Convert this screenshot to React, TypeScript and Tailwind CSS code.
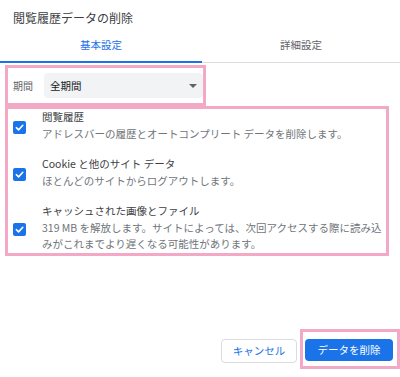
import React from 'react';

const pink = 'border-[#f3a8c6]';

const rows = [
  { title: '閲覧履歴', desc: 'アドレスバーの履歴とオートコンプリート データを削除します。' },
  { title: 'Cookie と他のサイト データ', desc: 'ほとんどのサイトからログアウトします。' },
  {
    title: 'キャッシュされた画像とファイル',
    desc: '319 MB を解放します。サイトによっては、次回アクセスする際に読み込みがこれまでより遅くなる可能性があります。',
  },
];

const CheckBox: React.FC = () => (
  <span className="flex h-[13px] w-[13px] shrink-0 items-center justify-center rounded-[2px] bg-[#1a73e8]">
    <svg viewBox="0 0 12 12" className="h-[11px] w-[11px]" fill="none">
      <path d="M2.5 6.2 L5 8.6 L9.6 3.6" stroke="white" strokeWidth="1.7" strokeLinecap="round" strokeLinejoin="round" />
    </svg>
  </span>
);

const App: React.FC = () => {
  return (
    <div
      className="h-[377px] w-[400px] overflow-hidden bg-white text-[#202124]"
      style={{ fontFamily: '"Noto Sans CJK JP", "Noto Sans", sans-serif' }}
    >
      <div className="h-[30px] pl-[13px] pt-[10px] text-[12px] leading-[16px] text-[#3c4043]">閲覧履歴データの削除</div>

      {/* tabs */}
      <div className="flex h-[33px] border-b border-[#dadce0] text-[10.5px] leading-[16px]">
        <div className="-mb-px flex w-[202px] justify-center border-b-2 border-[#1a73e8] pt-[7px] text-[#1a73e8]">基本設定</div>
        <div className="flex flex-1 justify-center pt-[7px] text-[#5f6368]">詳細設定</div>
      </div>

      {/* period */}
      <div className={`ml-[5px] mt-[2px] flex h-[41px] w-[201px] items-center border-[3px] ${pink}`}>
        <span className="ml-[5px] w-[31px] text-[10px] text-[#5f6368]">期間</span>
        <div className="flex h-[25px] w-[159px] items-center justify-between rounded-[4px] bg-[#f1f3f4] pl-[6px] pr-[6px] text-[10.5px]">
          <span>全期間</span>
          <span className="h-0 w-0 border-x-[4px] border-t-[4px] border-x-transparent border-t-[#5f6368]" />
        </div>
      </div>

      {/* checkboxes */}
      <div className={`ml-[5px] flex h-[150px] w-[384px] flex-col gap-[14px] border-[3px] ${pink}`}>
        {rows.map((r) => (
          <div key={r.title} className="flex items-center">
            <div className="ml-[5px] mt-[3px] w-[29px]">
              <CheckBox />
            </div>
            <div className="flex-1 pr-[1px] text-[10.5px] leading-[16.5px]">
              <div className="text-[#3c4043]">{r.title}</div>
              <div className="text-[#70757a]">{r.desc}</div>
            </div>
          </div>
        ))}
      </div>

      {/* footer */}
      <div className="mt-[73px] flex items-center justify-end">
        <button className="mr-[3px] mt-[4px] h-[24px] w-[76px] rounded-[4px] border border-[#dadce0] bg-white text-[10.5px] text-[#1a73e8]">
          キャンセル
        </button>
        <div className={`flex h-[40px] w-[100px] items-start border-[3px] ${pink} pl-[2px] pt-[7px]`}>
          <button className="h-[22px] w-[88px] rounded-[4px] bg-[#1a73e8] text-[10.5px] text-white">データを削除</button>
        </div>
      </div>
    </div>
  );
};

export default App;
